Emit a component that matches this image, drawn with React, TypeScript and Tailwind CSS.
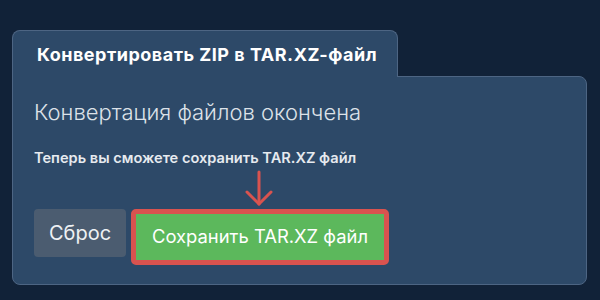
export default function App() {
  return (
    <div className="w-[600px] h-[300px] bg-[#112238] overflow-hidden" style={{ fontFamily: 'Inter, "Noto Sans", sans-serif' }}>
      <div className="pt-[30px] pl-3">
        <div className="relative z-10 w-[386px] h-[47px] -mb-px bg-[#2d4968] border border-b-0 border-[#4d6583] rounded-t-lg pl-6 flex items-center">
          <span className="text-white font-bold text-[18px] tracking-[0.5px]">Конвертировать ZIP в TAR.XZ-файл</span>
        </div>
        <div className="w-[575px] bg-[#2d4968] border border-[#4d6583] rounded-b-lg rounded-tr-lg pl-[21px] pt-[20px] pb-[19px]">
          <div className="text-[22px] leading-[30px] font-light text-[#dde2e8]">Конвертация файлов окончена</div>
          <div className="mt-[21px] text-[14.6px] leading-[20px] font-semibold text-[#e6eaef]">Теперь вы сможете сохранить TAR.XZ файл</div>
          <svg className="ml-[211px] mt-[2px] block" width="28" height="36" viewBox="0 0 28 36" fill="none" stroke="#d9534f" strokeWidth="3" strokeLinecap="round" strokeLinejoin="round">
            <path d="M14 2 L14 34" />
            <path d="M2 22 L14 34 L26 22" />
          </svg>
          <div className="mt-[3px] flex items-start gap-[5px]">
            <button className="w-[92px] h-[48px] bg-[#4b5c70] rounded text-[20px] text-[#eef1f4]">Сброс</button>
            <div className="border-[5px] border-[#d9534f] rounded-[5px]">
              <button className="w-[248px] h-[46px] bg-[#5cb85c] text-[18.4px] text-white">Сохранить TAR.XZ файл</button>
            </div>
          </div>
        </div>
      </div>
    </div>
  );
}
